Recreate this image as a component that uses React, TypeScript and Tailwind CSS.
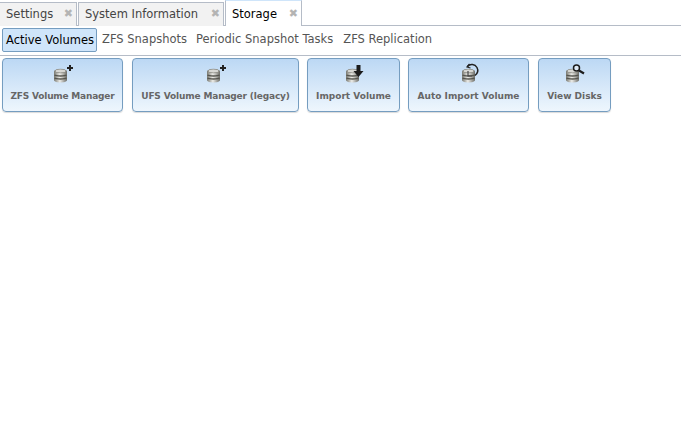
const cylinder = (
  <g>
    <path d="M1 4.500C1 3 4 2 7.500 2S14 3 14 4.500V13c0 1.600-3 2.500-6.500 2.500S1 14.600 1 13Z" fill="url(#disk)" />
    <ellipse cx="7.500" cy="4" rx="5.500" ry="1.800" fill="#d8d8d4" stroke="#77776f" strokeWidth=".6" />
    <path d="M1.500 8c1.500 1.300 10.500 1.300 12 0M1.500 11c1.500 1.300 10.500 1.300 12 0" stroke="#55554f" strokeWidth="1.300" fill="none" />
  </g>
)

function DiskIcon({ kind }: { kind: string }) {
  const shift = kind === "auto" ? "translate(5 5)" : kind === "down" ? "translate(4 5)" : "translate(3 5)"
  return (
    <svg width="26" height="22" viewBox="0 0 26 22" className="block">
      <defs>
        <linearGradient id="disk" x1="0" x2="1" y1="0" y2="0">
          <stop offset="0" stopColor="#77776f" />
          <stop offset=".45" stopColor="#ecece8" />
          <stop offset="1" stopColor="#6c6c66" />
        </linearGradient>
      </defs>
      <g transform={shift}>{cylinder}</g>
      {kind === "plus" && (
        <path d="M19 3h2v2h2v2h-2v2h-2V7h-2V5h2Z" fill="#222" />
      )}
      {kind === "down" && (
        <path d="M15.500 3h4v6h3L17.500 15 12.500 9h3Z" fill="#1c1c1c" />
      )}
      {kind === "auto" && (
        <g fill="none" stroke="#222">
          <path d="M11.500 4.500C14 1.500 19 2 21 5.500 22.500 8.500 21.500 11.500 19 13.500" strokeWidth="1.500" />
          <path d="M13.500 2 11 5 14.500 6" strokeWidth="1.200" />
          <path d="M12 9v5h4" strokeWidth="1.200" stroke="#444" />
        </g>
      )}
      {kind === "search" && (
        <g fill="none" stroke="#1c1c1c">
          <circle cx="14.500" cy="6" r="3" strokeWidth="1.500" fill="#dfeaf5" />
          <path d="M17 8.500 22 11.500" strokeWidth="2.200" />
        </g>
      )}
    </svg>
  )
}

function Tab({ title, width, active }: { title: string; width: string; active?: boolean }) {
  return (
    <div
      className={
        active
          ? width + " flex h-[26px] -mb-px items-center justify-between border border-b-0 border-[#b5bcc7] border-t-[#cfe5fa] bg-white pl-[6px] pr-[3px] pt-[2px] text-black"
          : width + " mt-[2px] flex h-[24px] items-center justify-between border border-b-0 border-[#b5bcc7] bg-[#f2f2f2] pl-[6px] pr-[3px] text-[#444]"
      }
    >
      <span>{title}</span>
      <span className="text-[11px] font-bold text-[#b4b4b4]">✖</span>
    </div>
  )
}

function ActionButton({ label, kind, width }: { label: string; kind: string; width: string }) {
  return (
    <button
      className={
        width +
        " flex h-[54px] flex-col items-center whitespace-nowrap rounded-[4px] border border-[#759dc0] bg-gradient-to-b from-[#bcd8f4] to-[#eef6fd] pt-[3px] text-[9px] font-bold text-[#666] shadow-[0_1px_1px_rgba(0,0,0,0.15)]"
      }
    >
      <DiskIcon kind={kind} />
      <span className="mt-[6px] leading-[12px]">{label}</span>
    </button>
  )
}

export default function App() {
  return (
    <div className="h-[436px] w-[681px] overflow-hidden bg-white font-['DejaVu_Sans',sans-serif] text-[11.5px]">
      <div className="flex h-[26px] gap-[1px] border-b border-[#b5bcc7]">
        <Tab title="Settings" width="-ml-px w-[78px]" />
        <Tab title="System Information" width="w-[146px]" />
        <Tab title="Storage" width="w-[77px]" active />
      </div>
      <div className="flex h-[30px] items-start border-b border-[#b5bcc7] pl-[2px] pt-[2px] leading-[22px] text-[#555]">
        <span className="h-[24px] w-[95px] rounded-[2px] border border-[#759dc0] bg-[#cfe5fa] pl-[3px] text-black">
          Active Volumes
        </span>
        <span className="px-[5px]">ZFS Snapshots</span>
        <span className="pl-[4px] pr-[5px]">Periodic Snapshot Tasks</span>
        <span className="px-[4px] pl-[5px]">ZFS Replication</span>
      </div>
      <div className="flex gap-[8px] pl-[2px] pt-[2px]">
        <ActionButton label="ZFS Volume Manager" kind="plus" width="w-[121px] tracking-[-0.2px]" />
        <ActionButton label="UFS Volume Manager (legacy)" kind="plus" width="ml-[1px] w-[167px] tracking-[-0.15px]" />
        <ActionButton label="Import Volume" kind="down" width="w-[93px]" />
        <ActionButton label="Auto Import Volume" kind="auto" width="w-[121px]" />
        <ActionButton label="View Disks" kind="search" width="ml-[1px] w-[73px]" />
      </div>
    </div>
  )
}
